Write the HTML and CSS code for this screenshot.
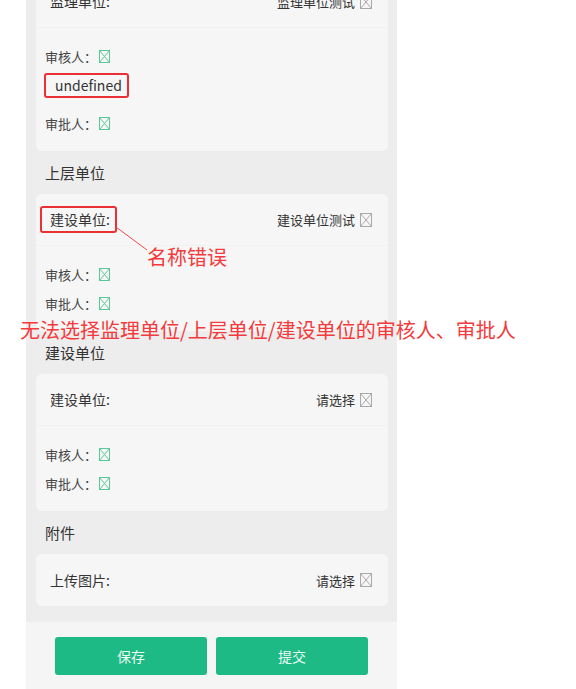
FILE: index.html
```html
<!DOCTYPE html>
<html lang="zh">
<head>
  <meta charset="UTF-8">
  <title>单位审批</title>
  <link rel="stylesheet" href="styles.css">
</head>
<body>
<div class="page">
  <div class="phone">
    <div class="content">
      <div class="card card-top">
        <div class="row">
          <span class="label">监理单位:</span>
          <span class="value">监理单位测试<svg class="pick" viewBox="0 0 12 14"><rect x="0.5" y="0.5" width="11" height="13"/><path d="M0.5 0.5L11.5 13.5M11.5 0.5L0.5 13.5"/></svg></span>
        </div>
        <div class="people">
          <div class="person">审核人：<svg class="man" viewBox="0 0 11 13"><rect x="0.5" y="0.5" width="10" height="12"/><path d="M0.5 0.5L10.5 12.5M10.5 0.5L0.5 12.5"/></svg></div>
          <div class="person-bad"><span class="mark">undefined</span></div>
          <div class="person person-last">审批人：<svg class="man" viewBox="0 0 11 13"><rect x="0.5" y="0.5" width="10" height="12"/><path d="M0.5 0.5L10.5 12.5M10.5 0.5L0.5 12.5"/></svg></div>
        </div>
      </div>

      <div class="title">上层单位</div>
      <div class="card">
        <div class="row">
          <span class="label label-bad">建设单位:</span>
          <span class="value">建设单位测试<svg class="pick" viewBox="0 0 12 14"><rect x="0.5" y="0.5" width="11" height="13"/><path d="M0.5 0.5L11.5 13.5M11.5 0.5L0.5 13.5"/></svg></span>
        </div>
        <div class="people">
          <div class="person">审核人：<svg class="man" viewBox="0 0 11 13"><rect x="0.5" y="0.5" width="10" height="12"/><path d="M0.5 0.5L10.5 12.5M10.5 0.5L0.5 12.5"/></svg></div>
          <div class="person">审批人：<svg class="man" viewBox="0 0 11 13"><rect x="0.5" y="0.5" width="10" height="12"/><path d="M0.5 0.5L10.5 12.5M10.5 0.5L0.5 12.5"/></svg></div>
        </div>
      </div>

      <div class="title">建设单位</div>
      <div class="card">
        <div class="row">
          <span class="label">建设单位:</span>
          <span class="value">请选择<svg class="pick" viewBox="0 0 12 14"><rect x="0.5" y="0.5" width="11" height="13"/><path d="M0.5 0.5L11.5 13.5M11.5 0.5L0.5 13.5"/></svg></span>
        </div>
        <div class="people">
          <div class="person">审核人：<svg class="man" viewBox="0 0 11 13"><rect x="0.5" y="0.5" width="10" height="12"/><path d="M0.5 0.5L10.5 12.5M10.5 0.5L0.5 12.5"/></svg></div>
          <div class="person">审批人：<svg class="man" viewBox="0 0 11 13"><rect x="0.5" y="0.5" width="10" height="12"/><path d="M0.5 0.5L10.5 12.5M10.5 0.5L0.5 12.5"/></svg></div>
        </div>
      </div>

      <div class="title">附件</div>
      <div class="card">
        <div class="row row-last">
          <span class="label">上传图片:</span>
          <span class="value">请选择<svg class="pick" viewBox="0 0 12 14"><rect x="0.5" y="0.5" width="11" height="13"/><path d="M0.5 0.5L11.5 13.5M11.5 0.5L0.5 13.5"/></svg></span>
        </div>
      </div>
    </div>

    <div class="footer">
      <button class="btn">保存</button>
      <button class="btn">提交</button>
    </div>
  </div>

  <!-- annotations -->
  <svg class="note-line" width="40" height="30" viewBox="0 0 40 30"><path d="M1 1L32 24"/></svg>
  <div class="note note-name">名称错误</div>
  <div class="note note-all">无法选择监理单位/上层单位/建设单位的审核人、审批人</div>
</div>
</body>
</html>
```

FILE: styles.css
```css
body {
  margin: 0;
  background: #fff;
  font-family: "Noto Sans CJK SC", "Noto Sans", sans-serif;
  color: #333;
}
.page {
  position: relative;
  height: 689px;
  overflow: hidden;
}
.phone {
  margin-left: 26px;
  width: 371px;
  background: #ededed;
}
.content {
  padding: 0 9px 16px 10px;
}
.card {
  background: #f6f6f6;
  border-radius: 6px;
}
.card-top {
  margin-top: -24px;
}
.row {
  height: 52px;
  display: flex;
  align-items: center;
  justify-content: space-between;
  padding: 0 16px 0 14px;
  border-bottom: 1px solid #f1f1f1;
  box-sizing: border-box;
  font-size: 14px;
}
.row-last {
  border-bottom: none;
}
.label {
  line-height: 23px;
  color: #333;
}
.label-bad {
  border: 2px solid #ea2f35;
  border-radius: 3px;
  padding: 0 5px 0 8px;
  margin-left: -10px;
}
.value {
  display: flex;
  align-items: center;
  font-size: 13px;
  color: #333;
}
.pick {
  width: 12px;
  height: 14px;
  margin-left: 5px;
  fill: none;
  stroke: #a9a9a9;
  stroke-width: 1;
}
.people {
  padding: 18px 0 18px 9px;
}
.person {
  display: flex;
  align-items: center;
  height: 20px;
  font-size: 13px;
  color: #444;
}
.person + .person {
  margin-top: 9px;
}
.person-last {
  margin-top: 15px;
}
.man {
  width: 11px;
  height: 13px;
  margin-left: 2px;
  fill: none;
  stroke: #5cc79b;
  stroke-width: 1;
}
.person-bad {
  margin-top: 6px;
}
.mark {
  display: inline-block;
  margin-left: -1px;
  border: 2px solid #ea2f35;
  border-radius: 3px;
  padding: 0 5px 0 9px;
  line-height: 21px;
  font-size: 14px;
  color: #333;
}
.title {
  padding: 12px 0 11px 9px;
  line-height: 20px;
  font-size: 15px;
  color: #333;
}
.footer {
  background: #f5f5f5;
  padding: 15px 29px;
  display: flex;
  gap: 9px;
}
.btn {
  width: 152px;
  height: 38px;
  border: none;
  border-radius: 3px;
  background: #1dba86;
  color: #eaf8f1;
  font-family: inherit;
  font-size: 14px;
}
.note {
  position: absolute;
  color: #f43a3c;
  font-size: 20px;
  line-height: 24px;
  white-space: nowrap;
}
.note-name {
  left: 147px;
  top: 245px;
}
.note-all {
  left: 20px;
  top: 318px;
}
.note-line {
  position: absolute;
  left: 115px;
  top: 226px;
  fill: none;
  stroke: #f2484a;
  stroke-width: 1;
}
```
